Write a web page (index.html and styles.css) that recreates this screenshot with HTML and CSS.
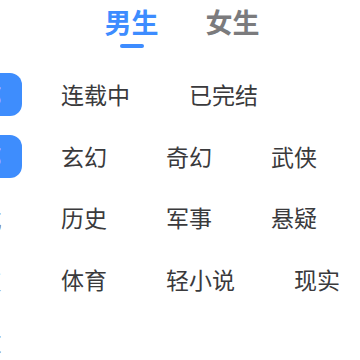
FILE: index.html
```html
<!DOCTYPE html>
<html lang="zh-CN">
    <head>
        <meta charset="UTF-8" />
        <meta name="viewport" content="width=device-width, initial-scale=1.0" />
        <title>分类</title>
        <link rel="stylesheet" href="styles.css">
    </head>
    <body>
        <div class="page">
            <nav class="tabs">
                <div class="tab active">
                    <span class="tab-label">男生</span>
                    <span class="tab-bar"></span>
                </div>
                <div class="tab">
                    <span class="tab-label">女生</span>
                    <span class="tab-bar"></span>
                </div>
            </nav>

            <section class="filters">
                <div class="filter-row">
                    <div class="lead"><span class="pill">全部</span></div>
                    <ul class="options">
                        <li class="option">连载中</li>
                        <li class="option">已完结</li>
                    </ul>
                </div>
                <div class="filter-row">
                    <div class="lead"><span class="pill">全部</span></div>
                    <ul class="options">
                        <li class="option">玄幻</li>
                        <li class="option">奇幻</li>
                        <li class="option">武侠</li>
                    </ul>
                </div>
                <div class="filter-row">
                    <div class="lead"><span class="lead-text">方式</span></div>
                    <ul class="options">
                        <li class="option">历史</li>
                        <li class="option">军事</li>
                        <li class="option">悬疑</li>
                    </ul>
                </div>
                <div class="filter-row">
                    <div class="lead"><span class="lead-text">竞技</span></div>
                    <ul class="options">
                        <li class="option">体育</li>
                        <li class="option">轻小说</li>
                        <li class="option">现实</li>
                    </ul>
                </div>
                <div class="filter-row">
                    <div class="lead"><span class="lead-text">字数</span></div>
                    <ul class="options"></ul>
                </div>
            </section>
        </div>
    </body>
</html>
```

FILE: styles.css
```css
* {
    box-sizing: border-box;
    margin: 0;
    padding: 0;
}
body {
    background-color: #fff;
    font-family: "Noto Sans CJK SC", "Noto Sans", sans-serif;
    overflow: hidden;
}
.page {
    width: 360px;
    height: 360px;
    overflow: hidden;
}

.tabs {
    display: flex;
    justify-content: center;
    gap: 47px;
    height: 64px;
    padding: 8px 0 0 4px;
}
.tab {
    display: flex;
    flex-direction: column;
    align-items: center;
    gap: 9px;
}
.tab-label {
    font-size: 27px;
    line-height: 1;
    font-weight: 700;
    color: #7b7b7d;
}
.tab-bar {
    width: 24px;
    height: 4px;
    border-radius: 2px;
}
.tab.active .tab-label {
    color: #3d8cff;
}
.tab.active .tab-bar {
    background-color: #3d8cff;
}

.filter-row {
    display: flex;
    align-items: center;
    height: 61.5px;
}
.lead {
    flex: none;
    width: 80px;
    margin-left: -58px;
    margin-right: 39px;
    display: flex;
    justify-content: center;
    align-items: center;
    height: 43px;
}
.pill {
    width: 100%;
    height: 100%;
    display: flex;
    justify-content: center;
    align-items: center;
    padding-right: 7px;
    border-radius: 12px;
    background-color: #3e8dfd;
    color: #fff;
    font-size: 23px;
}
.lead-text {
    margin-right: 7px;
    font-size: 23px;
    color: #777;
}
.options {
    list-style-type: none;
    display: flex;
    gap: 59px;
}
.option {
    font-size: 23px;
    line-height: 1;
    color: #3a3a3c;
    white-space: nowrap;
}
```
